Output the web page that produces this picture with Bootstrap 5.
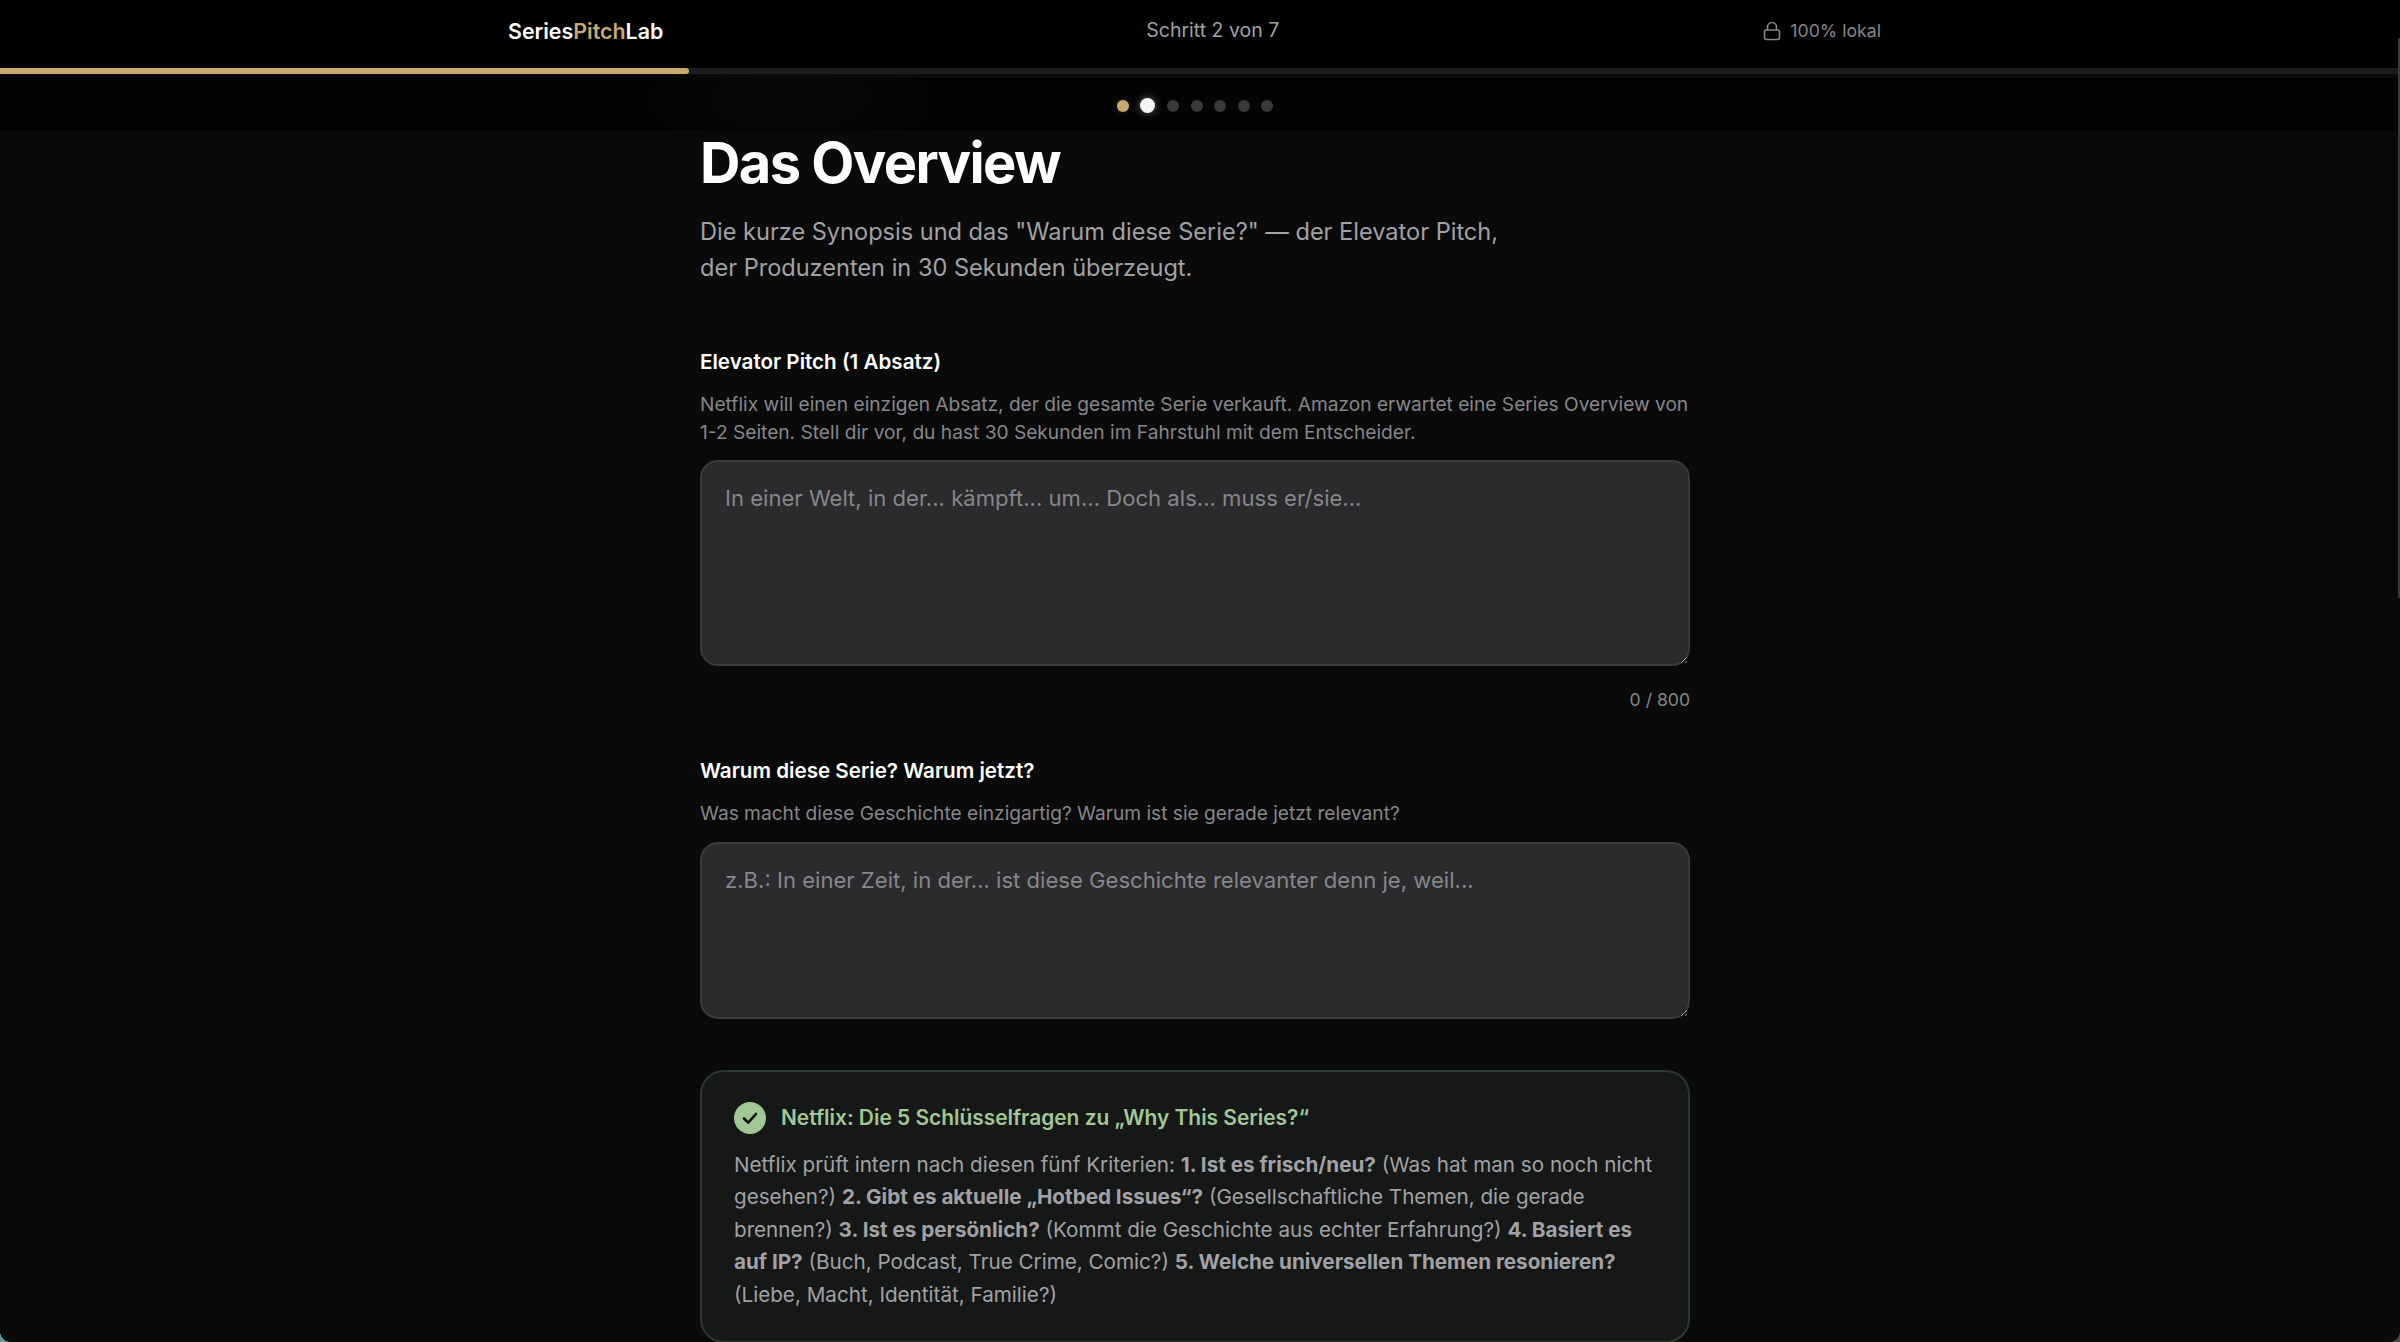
<!DOCTYPE html>
<html lang="de">
<head>
  <meta charset="UTF-8" />
  <title>SeriesPitchLab</title>
  <link href="https://cdn.jsdelivr.net/npm/bootstrap@5.3.0/dist/css/bootstrap.min.css" rel="stylesheet"/>
  <style>
    html, body {
      height: 100%;
      overflow: hidden;
    }

    body {
      position: relative;
      background-color: #0a0a0a;
      color: #fff;
      font-family: Inter, "Liberation Sans", sans-serif;
    }

    .top-head {
      background-color: #000;
      height: 68px;
    }

    .top-inner {
      width: 1373px;
      height: 62px;
      margin-left: 508px;
    }

    .brand-name {
      font-size: 21.4px;
      font-weight: 600;
    }

    .brand-name span {
      color: #c9a96e;
    }

    .step-text {
      font-size: 19.5px;
      color: #a1a1a6;
    }

    .local-text {
      font-size: 17.7px;
      color: #86868b;
    }

    .prog-track {
      height: 6px;
      background-color: #1c1c1e;
    }

    .prog-fill {
      height: 100%;
      background-color: #c9a96e;
      border-radius: 0 3px 3px 0;
    }

    .dots-band {
      height: 57px;
      gap: 11.6px;
      padding-top: 2px;
      padding-right: 10px;
      background-color: #030303;
      background-image: radial-gradient(ellipse 150px 60px at 790px 40%, rgba(201, 169, 110, .03), transparent);
      border-top: 4px solid #0a0a0c;
    }

    .step-dot {
      width: 12px;
      height: 12px;
      border-radius: 50%;
      background-color: #3a3a3c;
    }

    .step-dot.done {
      background-color: #c9a96e;
      box-shadow: 0 0 6px rgba(201, 169, 110, .3);
    }

    .step-dot.now {
      width: 15px;
      height: 15px;
      background-color: #f5f5f7;
      box-shadow: 0 0 8px rgba(255, 255, 255, .4);
    }

    .page-col {
      width: 990px;
      margin-left: 700px;
    }

    .page-title {
      font-size: 56px;
      font-weight: 700;
      letter-spacing: -1.6px;
      line-height: 1.1;
      margin-top: 2px;
      margin-bottom: 19px;
    }

    .page-lead {
      font-size: 23.55px;
      line-height: 36.8px;
      color: #a1a1a6;
      margin-bottom: 59px;
    }

    .field-label {
      font-size: 20.6px;
      font-weight: 600;
      line-height: 31px;
      margin-bottom: 14px;
      display: block;
    }

    .field-hint {
      font-size: 19.15px;
      line-height: 27.6px;
      color: #86868b;
      margin-bottom: 14px;
    }

    .dark-area {
      display: block;
      width: 100%;
      background-color: #2b2b2d;
      border: 2px solid #3a3a3c;
      border-radius: 18px;
      padding: 19px 23px;
      font-size: 22.1px;
      line-height: 1.6;
      color: #fff;
      outline: none;
    }

    .dark-area::placeholder {
      color: #86868b;
      opacity: 1;
    }

    .area-a {
      height: 206px;
    }

    .area-b {
      height: 177px;
    }

    .char-count {
      font-size: 17.6px;
      line-height: 27px;
      color: #86868b;
      margin-top: 20px;
      margin-bottom: 42px;
    }

    .tip-box {
      background-color: #151816;
      border: 2px solid #2c3a2e;
      border-radius: 24px;
      padding: 30px 32px;
      margin-top: 51px;
    }

    .tip-head {
      gap: 15px;
      margin-bottom: 15px;
    }

    .tip-icon {
      width: 32px;
      height: 32px;
      flex: none;
    }

    .tip-title {
      font-size: 20.9px;
      font-weight: 600;
      color: #a0c794;
    }

    .tip-body {
      font-size: 20.65px;
      line-height: 32.5px;
      color: #a1a1a6;
      margin: 0;
    }

    .tip-body strong {
      font-weight: 700;
    }

    /* window edge, lies over the page */
    .edge-line {
      position: absolute;
      top: 38px;
      right: 0;
      width: 2px;
      height: 560px;
      background-color: #3a3a3c;
    }

    .corner-bl, .corner-br {
      position: absolute;
      bottom: 0;
      width: 10px;
      height: 10px;
    }

    .corner-bl {
      left: 0;
      background: radial-gradient(circle at 100% 0, transparent 9.5px, #5f9ea0 10px);
    }

    .corner-br {
      right: 0;
      background: radial-gradient(circle at 0 0, transparent 9.5px, #454b49 10px);
    }
  </style>
</head>
<body>

  <header class="top-head">
    <div class="top-inner d-flex align-items-center justify-content-between">
      <div class="brand-name">Series<span>Pitch</span>Lab</div>
      <div class="step-text">Schritt 2 von 7</div>
      <div class="local-text d-flex align-items-center gap-2">
        <svg width="20" height="20" viewBox="0 0 20 20" fill="none" stroke="#86868b" stroke-width="1.6" stroke-linecap="round" stroke-linejoin="round">
          <rect x="2.5" y="9" width="15" height="9.5" rx="2"/>
          <path d="M5.5 9V6a4.5 4.5 0 0 1 9 0v3"/>
        </svg>
        <span>100% lokal</span>
      </div>
    </div>
  </header>

  <div class="prog-track">
    <div class="prog-fill" style="width: 28.7%"></div>
  </div>

  <div class="dots-band d-flex align-items-center justify-content-center">
    <span class="step-dot done"></span>
    <span class="step-dot now"></span>
    <span class="step-dot"></span>
    <span class="step-dot"></span>
    <span class="step-dot"></span>
    <span class="step-dot"></span>
    <span class="step-dot"></span>
  </div>

  <main class="page-col">
    <h1 class="page-title">Das Overview</h1>
    <p class="page-lead">Die kurze Synopsis und das "Warum diese Serie?" — der Elevator Pitch,<br>der Produzenten in 30 Sekunden überzeugt.</p>

    <label class="field-label" for="pitch">Elevator Pitch (1 Absatz)</label>
    <p class="field-hint">Netflix will einen einzigen Absatz, der die gesamte Serie verkauft. Amazon erwartet eine Series Overview von 1-2 Seiten. Stell dir vor, du hast 30 Sekunden im Fahrstuhl mit dem Entscheider.</p>
    <textarea id="pitch" class="dark-area area-a" placeholder="In einer Welt, in der... kämpft... um... Doch als... muss er/sie..."></textarea>
    <div class="char-count text-end">0 / 800</div>

    <label class="field-label" for="why">Warum diese Serie? Warum jetzt?</label>
    <p class="field-hint">Was macht diese Geschichte einzigartig? Warum ist sie gerade jetzt relevant?</p>
    <textarea id="why" class="dark-area area-b" placeholder="z.B.: In einer Zeit, in der... ist diese Geschichte relevanter denn je, weil..."></textarea>

    <section class="tip-box">
      <div class="tip-head d-flex align-items-center">
        <svg class="tip-icon" viewBox="0 0 32 32">
          <circle cx="16" cy="16" r="16" fill="#a0c794"/>
          <path d="M10 16.5l4.2 4.2L22 12" fill="none" stroke="#0a0a0a" stroke-width="2.6" stroke-linecap="round" stroke-linejoin="round"/>
        </svg>
        <div class="tip-title">Netflix: Die 5 Schlüsselfragen zu „Why This Series?“</div>
      </div>
      <p class="tip-body">Netflix prüft intern nach diesen fünf Kriterien: <strong>1. Ist es frisch/neu?</strong> (Was hat man so noch nicht gesehen?) <strong>2. Gibt es aktuelle „Hotbed Issues“?</strong> (Gesellschaftliche Themen, die gerade brennen?) <strong>3. Ist es persönlich?</strong> (Kommt die Geschichte aus echter Erfahrung?) <strong>4. Basiert es auf IP?</strong> (Buch, Podcast, True Crime, Comic?) <strong>5. Welche universellen Themen resonieren?</strong> (Liebe, Macht, Identität, Familie?)</p>
    </section>
  </main>

  <div class="edge-line"></div>
  <div class="corner-bl"></div>
  <div class="corner-br"></div>

  <script src="https://cdn.jsdelivr.net/npm/bootstrap@5.3.0/dist/js/bootstrap.bundle.min.js"></script>
</body>
</html>
